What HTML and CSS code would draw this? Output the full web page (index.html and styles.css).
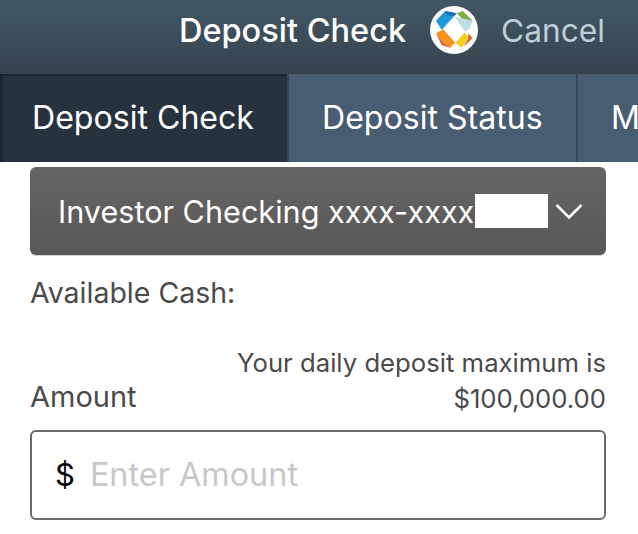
FILE: index.html
```html
<!DOCTYPE html>
<html lang="en">
<head>
    <meta charset="UTF-8">
    <meta name="viewport" content="width=device-width, initial-scale=1.0">
    <title>Deposit Check</title>
    <link rel="stylesheet" href="styles.css">
</head>
<body>
    <header class="top-bar">
        <div class="top-title">Deposit Check</div>
        <svg class="logo" width="48" height="48" viewBox="0 0 48 48">
            <circle cx="24" cy="24" r="24" fill="#fff"/>
            <polygon points="6,14.7 15,5 26.7,7.3 11.7,24" fill="#1e9ad6"/>
            <polygon points="15,5 26.7,7.3 24,10 17,9" fill="#1b6fb8"/>
            <polygon points="26.7,7.3 32.7,5 42.7,14.7 35,15.7" fill="#7cb043"/>
            <polygon points="25,10.7 42.7,14.7 40,22.3 35,25.7" fill="#bcdde6"/>
            <polygon points="6,27.3 13.3,23.3 25,36.7 20,41.7 13,37" fill="#f6901e"/>
            <polygon points="6,27.3 11.7,39 20,41.7 13,37" fill="#d9532a"/>
            <polygon points="25,36.7 35,26.3 38.3,32.3 31.7,41.7" fill="#f3d01f"/>
            <polygon points="38.3,27.3 42.7,32.3 33.3,40.7 38,33" fill="#e0662a"/>
        </svg>
        <div class="top-cancel">Cancel</div>
    </header>

    <nav class="tabs">
        <div class="tab tab-active">Deposit Check</div>
        <div class="tab">Deposit Status</div>
        <div class="tab">More</div>
    </nav>

    <main class="content">
        <div class="account-select">
            <span class="account-name">Investor Checking xxxx-xxxx</span>
            <span class="account-mask"></span>
            <svg class="chevron" width="28" height="17" viewBox="0 0 28 17">
                <path d="M1.5 2 L14 14.5 L26.5 2" fill="none" stroke="#fff" stroke-width="2.5"/>
            </svg>
        </div>

        <div class="cash-label">Available Cash:</div>

        <div class="amount-row">
            <div class="amount-label">Amount</div>
            <div class="amount-max">Your daily deposit maximum is<br>$100,000.00</div>
        </div>

        <div class="amount-input">
            <span class="dollar">$</span>
            <span class="placeholder">Enter Amount</span>
        </div>
    </main>
</body>
</html>
```

FILE: styles.css
```css
/* Reset */
body, html {
    margin: 0;
    padding: 0;
    height: 100%;
    overflow: hidden;
    background: #fff;
    font-family: Inter, "Noto Sans", sans-serif;
}

/* Top bar */
.top-bar {
    height: 74px;
    display: flex;
    justify-content: flex-end;
    align-items: center;
    padding: 0 33px 14px 0;
    background: linear-gradient(#425765, #36434f);
    box-sizing: border-box;
}

.top-title {
    font-size: 32.5px;
    font-weight: 500;
    color: #fff;
    margin-right: 24px;
}

.logo {
    flex: none;
    margin-right: 23px;
}

.top-cancel {
    font-size: 31.7px;
    color: #bccfd8;
}

/* Tabs */
.tabs {
    height: 88px;
    display: flex;
    overflow: hidden;
    background: #495d72;
}

.tab {
    flex: none;
    width: 289px;
    box-sizing: border-box;
    padding-left: 33px;
    line-height: 88px;
    font-size: 32.1px;
    color: #fff;
    border-right: 2px solid #36475a;
}

.tab-active {
    padding-left: 32px;
    background: #27323f;
    box-shadow: inset 0 3px 3px -2px #141b23, inset 4px 0 4px -3px #141b23;
}

/* Content */
.content {
    padding: 5px 32px 0 30px;
}

.account-select {
    height: 88px;
    display: flex;
    align-items: center;
    box-sizing: border-box;
    padding-left: 28px;
    border-radius: 6px;
    background: linear-gradient(#666564, #595757);
    box-shadow: 0 1px 1px rgba(0, 0, 0, 0.2);
    color: #fff;
}

.account-name {
    font-size: 30.6px;
    white-space: nowrap;
}

.account-mask {
    width: 73px;
    height: 34px;
    margin-left: auto;
    background: #fff;
}

.chevron {
    flex: none;
    margin: 0 23px 0 7px;
}

.cash-label {
    margin: 20px 0 0 0;
    font-size: 28.5px;
    line-height: 36px;
    color: #4a4a4a;
}

.amount-row {
    display: flex;
    justify-content: space-between;
    align-items: flex-end;
    margin-top: 34px;
}

.amount-label {
    margin: 0 0 2px 0;
    font-size: 29px;
    line-height: 36px;
    color: #4a4a4a;
}

.amount-max {
    text-align: right;
    font-size: 25.7px;
    line-height: 36px;
    color: #4a4a4a;
}

.amount-input {
    height: 90px;
    margin-top: 13px;
    display: flex;
    align-items: center;
    box-sizing: border-box;
    padding: 0 0 2px 23px;
    border: 2.5px solid #6a6a6a;
    border-radius: 6px;
}

.dollar {
    font-size: 31px;
    color: #000;
    margin-right: 15px;
}

.placeholder {
    font-size: 32.4px;
    color: #c8c8c8;
}
```
